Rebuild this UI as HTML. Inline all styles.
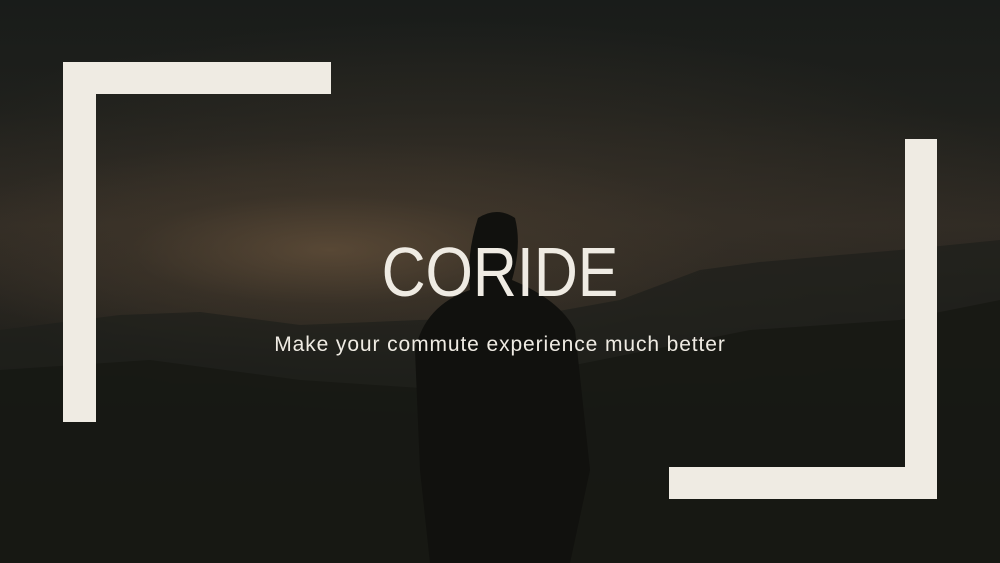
<!DOCTYPE html>
<html><head><style>
html,body{margin:0;padding:0}
body{width:1000px;height:563px;position:relative;overflow:hidden;background:#161713;font-family:"Liberation Sans",sans-serif}
.bg{position:absolute;inset:0;background:
radial-gradient(ellipse 400px 110px at 330px 250px,rgba(100,80,58,.75),rgba(70,58,44,.4) 50%,rgba(0,0,0,0) 100%),
radial-gradient(ellipse 600px 200px at 450px 220px,rgba(60,52,42,.7),rgba(0,0,0,0) 100%),
linear-gradient(#191c1a 0%,#1f201c 20%,#302b24 40%,#25231e 55%,#1a1b17 70%,#141510 100%);}
.b{position:absolute;background:#efebe3}
h1{position:absolute;left:0;width:1000px;top:232px;margin:0;text-align:center;color:#efebe3;font-weight:normal;font-size:70px;transform:scaleX(0.87)}
p{position:absolute;left:0;width:1000px;top:333px;margin:0;text-align:center;color:#efebe3;font-size:21px;letter-spacing:.9px}
</style></head><body>
<div class="bg"></div>
<svg style="position:absolute;left:0;top:0" width="1000" height="563">
<path d="M0 330 L120 315 L200 312 L300 325 L420 320 L520 318 L620 300 L700 270 L760 262 L840 255 L900 250 L1000 240 L1000 563 L0 563Z" fill="#1e201b" opacity=".7"/>
<path d="M0 370 L150 360 L300 380 L450 390 L600 360 L750 330 L900 320 L1000 300 L1000 563 L0 563Z" fill="#171813" opacity=".8"/>
<path d="M478 218 Q497 206 515 218 Q522 245 512 280 Q560 300 575 330 L590 470 L570 563 L430 563 L420 470 L415 350 Q425 305 470 290 Q466 255 478 218Z" fill="#11110e"/>
</svg>
<div class="b" style="left:63px;top:62px;width:268px;height:32px"></div>
<div class="b" style="left:63px;top:62px;width:33px;height:360px"></div>
<div class="b" style="left:905px;top:139px;width:32px;height:360px"></div>
<div class="b" style="left:669px;top:467px;width:268px;height:32px"></div>
<h1>CORIDE</h1>
<p>Make your commute experience much better</p>
</body></html>
